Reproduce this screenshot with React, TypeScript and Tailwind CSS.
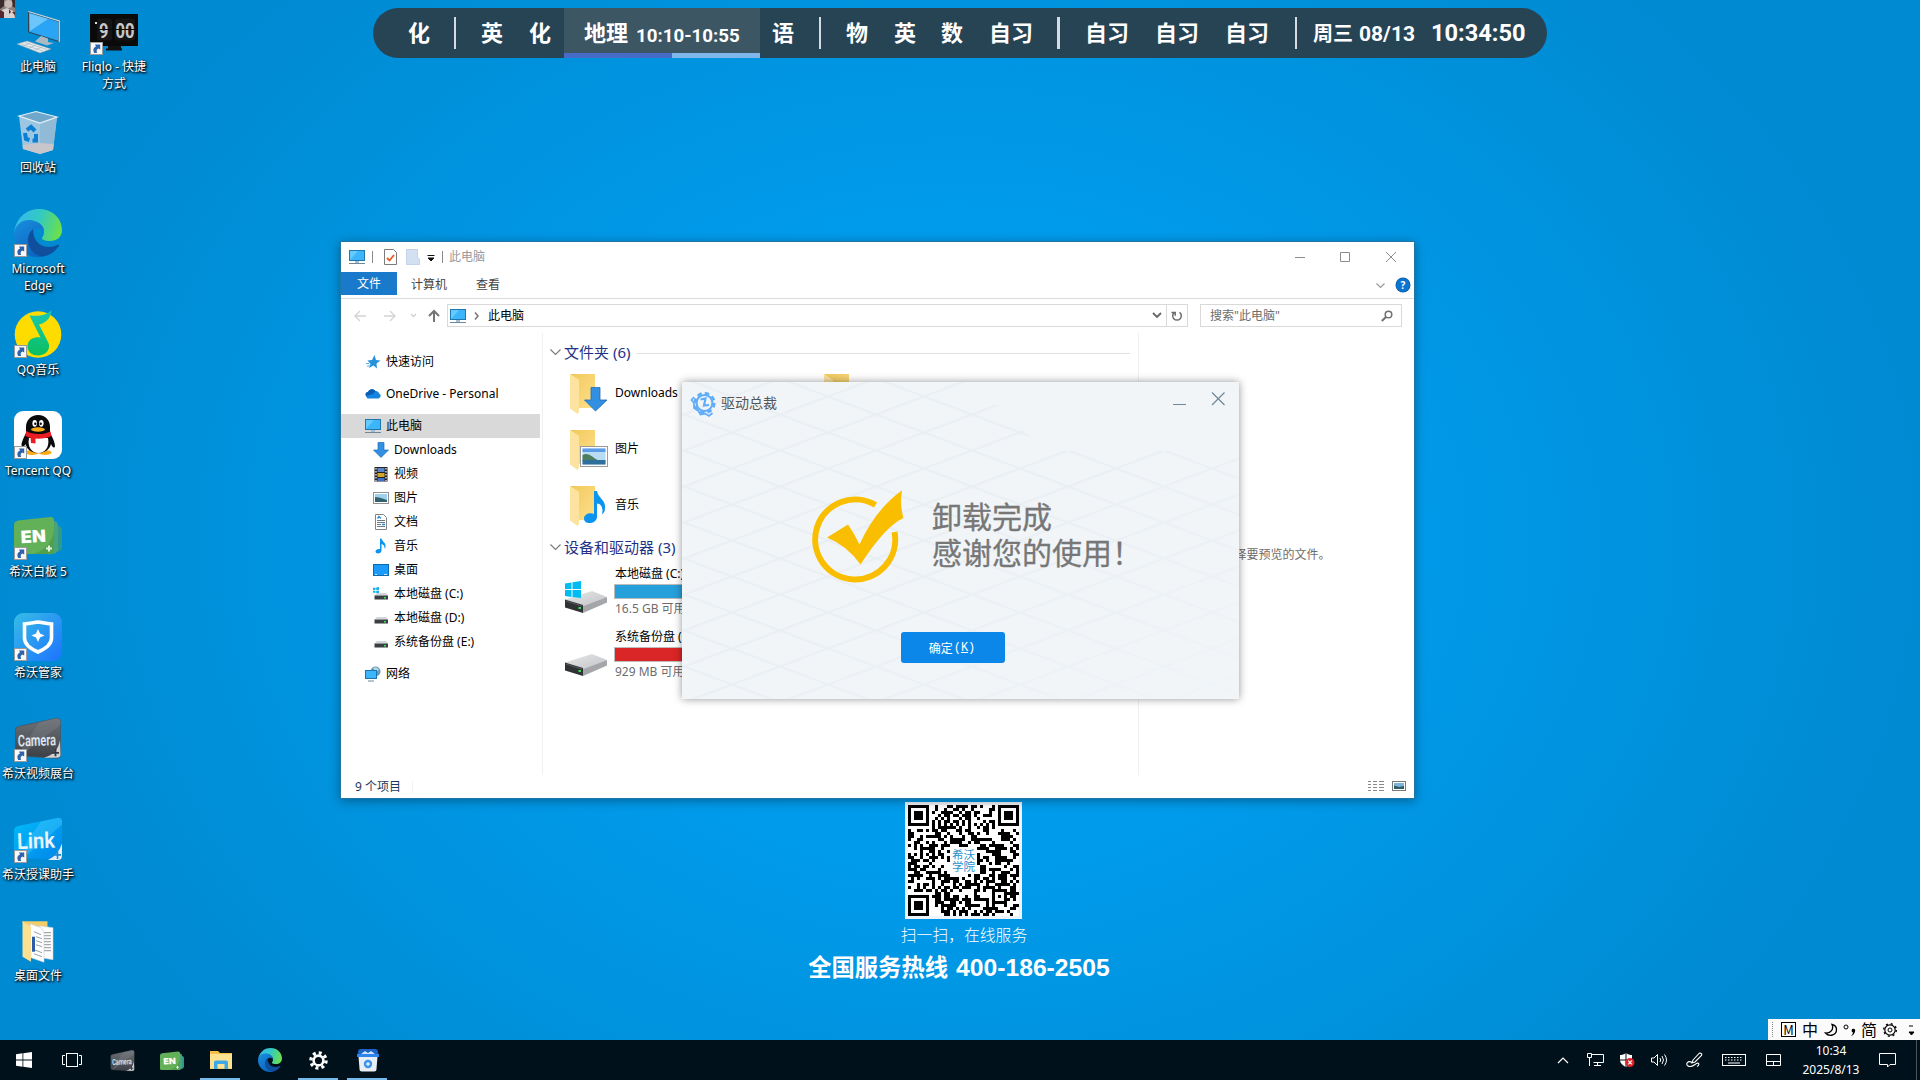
import type { ReactNode } from "react";

const UI = "font-['Noto_Sans','Noto_Sans_CJK_SC',sans-serif]";

/* ---------- shared icons ---------- */

function Monitor() {
  return (
    <svg width="16" height="16" viewBox="0 0 16 16" className="shrink-0">
      <rect x="0.5" y="1.5" width="15" height="10" fill="#3db5fb" stroke="#1f77ab" />
      <path d="M1 11 L9 2 H1Z" fill="#65cbff" />
      <rect x="6" y="12" width="4" height="2" fill="#9dc0d6" />
      <rect x="0" y="14" width="16" height="1" fill="#6f8797" />
    </svg>
  );
}

function Shortcut() {
  return (
    <svg width="13" height="13" viewBox="0 0 13 13" className="absolute bottom-0 left-0">
      <rect x="0.5" y="0.5" width="12" height="12" fill="#f6f8fa" stroke="#9b9b9b" />
      <path d="M4.2 11 C2.6 8 3.4 5.6 6 4.6 L5 2.6 H10.2 V7.6 L8.4 6.6 C6.6 7.4 6.4 8.6 7 11Z" fill="#2f62a8" />
    </svg>
  );
}

function EdgeLogo({ size, id }: { size: number; id: string }) {
  return (
    <svg width={size} height={size} viewBox="0 0 48 48">
      <defs>
        <linearGradient id={`${id}a`} x1="0" y1="0.3" x2="1" y2="0.5">
          <stop offset="0" stopColor="#35b8f0" />
          <stop offset="0.5" stopColor="#32c9c4" />
          <stop offset="1" stopColor="#6be04a" />
        </linearGradient>
        <linearGradient id={`${id}b`} x1="0" y1="0" x2="0.6" y2="1">
          <stop offset="0" stopColor="#1a8fe0" />
          <stop offset="1" stopColor="#0a66c0" />
        </linearGradient>
      </defs>
      <path d="M0 24 C2 9 12 0 25 0 C39 0 48 10 48 21 C48 28 43 32 36 32 C31 32 28 31 28 29 C28 28 30 27 30 23 C30 16 23 12 15 12 C8 12 2 17 0 24Z" fill={`url(#${id}a)`} />
      <path d="M0 24 C2 15 8 11 15 11 C23 11 30 16 30 22 C28 19 22 18 19 22 C13 29 18 44 30 47.5 C12 51 0 38 0 24Z" fill={`url(#${id}b)`} />
      <path d="M19 20 C13 25 11 36 20 44 C24 47 28 48 31 47 C37 46 42 41 45 37 C45.500 36 44.500 35.500 43.500 36 C33 41 19 37 19 20Z" fill="#0f4f9e" />
    </svg>
  );
}

function EnLogo({ w }: { w: number }) {
  return (
    <svg width={w} height={w} viewBox="0 -3.500 48 48">
      <path d="M38 8 L46 11 Q48 12 48 15 V32 Q47 36 44 36 L38 37Z" fill="#2f9a86" />
      <path d="M36 5 L42 6 Q44 7 44 10 V34 Q43 38 40 38 L34 39Z" fill="#4aa27a" />
      <path d="M0 9 Q0 6 4 5 L36 1.500 Q40 1 40 5 V35 Q40 38.500 36 38.500 H3 Q0 38.500 0 36Z" fill="#62b058" />
      <path d="M40 14 Q38 32 20 38.500 H36 Q40 38.500 40 35Z" fill="#51a04b" />
      <path d="M32 33 H38 M35 30 V36" stroke="#dff2dc" strokeWidth="2" />
      <text x="7" y="27" fontSize="17" fontWeight="900" fill="#fff" fontFamily="Inter" textLength="25" lengthAdjust="spacingAndGlyphs" transform="rotate(-3 20 25)">EN</text>
    </svg>
  );
}

function CameraLogo({ w, id }: { w: number; id: string }) {
  return (
    <svg width={w} height={w} viewBox="0 -2.800 48 48">
      <defs>
        <linearGradient id={id} x1="0" y1="0" x2="0" y2="1">
          <stop offset="0" stopColor="#6d7278" />
          <stop offset="1" stopColor="#3c4045" />
        </linearGradient>
      </defs>
      <path d="M1.500 13 Q1.500 10 5 9.500 L42 1.500 Q46.500 1 46.500 5 V38 Q46.500 41.500 43 41.500 L4 39 Q1.500 38 1.500 36Z" fill={`url(#${id})`} stroke="#4a4e53" strokeWidth="0.600" />
      <path d="M25 5.500 L42 1.500 Q46.500 1 46.500 5 V8 L8 38 L4 38 L12 26Z" fill="#80858a" opacity="0.35" />
      <path d="M46 23 Q44 37 30 41 H43 Q46.500 41 46.500 38Z" fill="#cfd2d5" />
      <path d="M38 36 H45 M41.500 32.500 V39.500" stroke="#33373b" strokeWidth="1.800" />
      <text x="4" y="29" fontSize="16" fontWeight="600" fill="#dce6f0" fontFamily="Roboto" textLength="38" lengthAdjust="spacingAndGlyphs" transform="rotate(-2 24 26)">Camera</text>
    </svg>
  );
}

function ThisPc() {
  return (
    <svg width="48" height="48" viewBox="0 0 48 48">
      <path d="M14.500 5 L45 14.500 V34.500 L14.500 25Z" fill="#2aa4f4" stroke="#30434f" strokeWidth="1" />
      <path d="M15.500 6.500 L34 12 L16 24Z" fill="#6cc6fb" />
      <path d="M14.300 4.500 L45.300 14 V35" fill="none" stroke="#cdd9e0" strokeWidth="1.200" />
      <path d="M27 29 L34 31.500 V35 L40 36 L33 38.500 L21 34.500Z" fill="#a9bac4" />
      <path d="M3 37 L13 34 L37 42 L26 46Z" fill="#e5ebef" stroke="#90a2ad" strokeWidth="0.600" />
      <path d="M7 37 L29 44 M11 35.500 L33 42.500 M9 39 L16 36 M15 41 L22 38 M21 43 L28 40" stroke="#a9b7c0" strokeWidth="0.700" />
    </svg>
  );
}

function RecycleBin() {
  return (
    <svg width="48" height="48" viewBox="0 0 48 48">
      <path d="M5 8 L23 14 L43 9 L39 42 L26 46 L9 41Z" fill="#a9cbe2" opacity="0.92" />
      <path d="M26 14.500 L43 9 L39 42 L26 46Z" fill="#8fb8d5" opacity="0.900" />
      <path d="M5 8 L22 3.500 L43 9 L26 15Z" fill="#6fa7cb" stroke="#e3eff6" strokeWidth="1.200" />
      <path d="M8.500 37 L26 35 L39.500 36 L39 42 L26 46 L9 41Z" fill="#c9c6cb" />
      <g fill="none" stroke="#0b7fd4" strokeWidth="4">
        <path d="M13 22 L17 19 L21 23" />
        <path d="M11 25 L12 31 L15.500 32" />
        <path d="M22 26 L22 32.500 L18.500 32.500" />
      </g>
    </svg>
  );
}

function Fliqlo() {
  return (
    <svg width="48" height="48" viewBox="0 0 48 48">
      <rect x="0" y="7" width="48" height="32" fill="#0a0a0a" />
      <path d="M18 39 H31 V41.500 H32 V43.500 H16 V41.500 H18Z" fill="#111" />
      <rect x="7" y="11.500" width="15" height="22" rx="2" fill="#151515" />
      <rect x="25" y="11.500" width="20" height="22" rx="2" fill="#151515" />
      <text x="9" y="30.500" fontSize="21" fontWeight="700" fill="#c9c9c9" fontFamily="Roboto" textLength="9.500" lengthAdjust="spacingAndGlyphs">9</text>
      <text x="25.500" y="30.500" fontSize="21" fontWeight="700" fill="#c9c9c9" fontFamily="Roboto" textLength="19" lengthAdjust="spacingAndGlyphs">00</text>
      <rect x="5" y="15" width="2" height="2" fill="#ddd" />
      <path d="M7 22.500 H45" stroke="#0a0a0a" strokeWidth="1" />
    </svg>
  );
}

function QQMusic() {
  return (
    <svg width="48" height="48" viewBox="0 0 48 48">
      <defs>
        <linearGradient id="qm" x1="0" y1="0" x2="0" y2="1">
          <stop offset="0" stopColor="#18c9b4" />
          <stop offset="1" stopColor="#0abf5f" />
        </linearGradient>
      </defs>
      <circle cx="24" cy="24.500" r="23.300" fill="#fedc00" />
      <path d="M37.500 0 C37 8 32 13 25 14.500 L34.500 33 C37 40 31 45.500 24 45.500 C17 45.500 13.500 41 13.500 36.500 C13.500 30 19 26 26.500 27.500 L15.500 5.500 C25 6.500 33 5 37.500 0Z" fill="url(#qm)" />
    </svg>
  );
}

function QQ() {
  return (
    <svg width="48" height="48" viewBox="0 0 48 48">
      <rect width="48" height="48" rx="9" fill="#fff" />
      <ellipse cx="18" cy="41.500" rx="7" ry="2.500" fill="#fbab18" />
      <ellipse cx="31" cy="41.500" rx="6.500" ry="2.500" fill="#fbab18" />
      <path d="M24 4 C32 4 36 10 36 16 V22 C39 27 41 32 41 35 C40.500 38 38 36 37 33 C36 38 31 42 24 42 C18 42 12 38 11.500 33 C10 36 8 37 7.500 34 C7.500 31 10 26 12 22 V16 C12 9 17 4 24 4Z" fill="#0a0a0a" />
      <path d="M15 27 H34 C36 37 30 42 24.500 42 C18 42 13 36 15 27Z" fill="#fff" />
      <ellipse cx="20.700" cy="12.300" rx="2.300" ry="3.400" fill="#fff" />
      <ellipse cx="27.300" cy="12.300" rx="2.300" ry="3.400" fill="#fff" />
      <circle cx="21.300" cy="12.800" r="1.200" fill="#111" />
      <circle cx="26.700" cy="12.800" r="1.200" fill="#111" />
      <ellipse cx="24" cy="18.500" rx="7" ry="2.200" fill="#fbab18" />
      <path d="M12 20 C18 24 30 24 36.500 20.500 L37.500 25 C30 28.500 19 28.500 11.500 25Z" fill="#ec1c24" />
      <path d="M16.500 26 H21.500 V32.500 L17 32Z" fill="#ec1c24" />
    </svg>
  );
}

function Guard() {
  return (
    <svg width="48" height="48" viewBox="0 0 48 48">
      <defs>
        <linearGradient id="gd" x1="0" y1="0" x2="1" y2="1">
          <stop offset="0" stopColor="#36bde6" />
          <stop offset="1" stopColor="#1d73ff" />
        </linearGradient>
      </defs>
      <rect width="48" height="48" rx="9" fill="url(#gd)" />
      <path d="M10.500 11 C16 10.500 20 9.500 24 9 C28 9.500 32 10.500 37.500 11 V25 C37.500 32 31 36 24 39 C17 36 10.500 32 10.500 25Z" fill="none" stroke="#fff" strokeWidth="3.600" />
      <path d="M24 16 L26 20.500 L30.500 22.500 L26 24.500 L24 29 L22 24.500 L17.500 22.500 L22 20.500Z" fill="#fff" />
    </svg>
  );
}

function LinkLogo() {
  return (
    <svg width="48" height="48" viewBox="0 -2.400 48 48">
      <defs>
        <linearGradient id="lk" x1="0" y1="0" x2="1" y2="1">
          <stop offset="0" stopColor="#00bdfb" />
          <stop offset="1" stopColor="#0084e8" />
        </linearGradient>
      </defs>
      <path d="M0 13 Q0 9.500 4 8.500 L43 0.500 Q48 0 48 4 V38 Q48 42.500 44 42.500 L4 40 Q0 40 0 36Z" fill="url(#lk)" />
      <path d="M27 4 L43 0.500 Q48 0 48 4 V7 L10 40 H4 L14 22Z" fill="#52d0ff" opacity="0.350" />
      <path d="M48 26 Q44 38 34 42.500 H44 Q48 42.500 48 38Z" fill="#e3edf3" />
      <path d="M39 37.500 H47 M43.500 34 V41.500" stroke="#2086d4" strokeWidth="1.600" />
      <text x="3" y="31" fontSize="22" fontWeight="600" fill="#e9f4fc" fontFamily="Roboto" textLength="38" lengthAdjust="spacingAndGlyphs" transform="rotate(-2 20 25)">Link</text>
    </svg>
  );
}

function DocFolder() {
  return (
    <svg width="48" height="48" viewBox="0 -2.700 48 48">
      <path d="M8.500 2.500 H33.500 V38 H16Z" fill="#f2cd68" />
      <path d="M25 7 L39 9 V41 L27 39Z" fill="#fdfdfd" stroke="#c9ced3" strokeWidth="0.600" />
      <path d="M29 14 H37 M29 17 H37 M29 20 H37 M29 23 H37 M29 26 H37 M29 29 H37 M29 32 H37" stroke="#8f979e" strokeWidth="1" />
      <path d="M16 5 L27 9 L30 14 V43.500 L17 39Z" fill="#fff" stroke="#c9ced3" strokeWidth="0.600" />
      <path d="M20 13 L27 16 M22 18 L28 20 M22 22 L28 24 M22 26 L28 28 M20 31 L28 34 M20 35 L28 38" stroke="#9aa1a8" strokeWidth="1" />
      <rect x="18" y="18" width="3" height="15" fill="#2d5ca8" />
      <path d="M8.500 2.500 L17 8 V43 L8.500 38Z" fill="#fbe093" />
    </svg>
  );
}

/* ---------- desktop ---------- */

type DesktopItem = { label: string; icon: ReactNode; link?: boolean };

const columnOne: DesktopItem[] = [
  { label: "此电脑", icon: <ThisPc /> },
  { label: "回收站", icon: <RecycleBin /> },
  { label: "Microsoft Edge", icon: <EdgeLogo size={48} id="ed" />, link: true },
  { label: "QQ音乐", icon: <QQMusic />, link: true },
  { label: "Tencent QQ", icon: <QQ />, link: true },
  { label: "希沃白板 5", icon: <EnLogo w={48} />, link: true },
  { label: "希沃管家", icon: <Guard />, link: true },
  { label: "希沃视频展台", icon: <CameraLogo w={48} id="cm" />, link: true },
  { label: "希沃授课助手", icon: <LinkLogo />, link: true },
  { label: "桌面文件", icon: <DocFolder /> },
];

function DesktopIcon({ label, icon, link }: DesktopItem) {
  return (
    <div className="flex h-[101px] w-[76px] flex-col items-center">
      <div className="relative h-12 w-12 shrink-0">
        {icon}
        {link && <Shortcut />}
      </div>
      <div className="mt-[3px] w-[74px] text-center text-[12px] leading-[17px] text-white [text-shadow:1px_1px_2px_#000,1px_1px_3px_#000]">{label}</div>
    </div>
  );
}

function Sep({ w }: { w: string }) {
  return <div className={`h-8 shrink-0 bg-[#d5dbe0] ${w}`} />;
}

function Schedule() {
  return (
    <div className="absolute left-[373px] top-2 flex h-[50px] w-[1174px] items-center overflow-hidden rounded-full bg-[#274455] pl-[35px] font-['Roboto','Noto_Sans_CJK_SC',sans-serif] text-[22px] font-bold leading-none whitespace-nowrap text-white">
      <span className="mt-[2px] w-[22px]">化</span>
      <div className="ml-6"><Sep w="w-[2px]" /></div>
      <span className="mt-[2px] ml-[25px] w-[22px]">英</span>
      <span className="mt-[2px] ml-[26px] w-[22px]">化</span>
      <div className="relative ml-[13px] flex h-full w-[196px] shrink-0 items-center bg-[#3c5663] pl-5">
        <span className="mt-[2px] w-11">地理</span>
        <span className="mt-[7px] ml-2 text-[18.700px]">10:10-10:55</span>
        <div className="absolute bottom-0 left-0 flex h-[5px] w-full">
          <div className="w-[108px] bg-[#466cc8]" />
          <div className="flex-1 bg-[#7fb7ea]" />
        </div>
      </div>
      <span className="mt-[2px] ml-3 w-[22px]">语</span>
      <div className="ml-[25px]"><Sep w="w-[2px]" /></div>
      <span className="mt-[2px] ml-[25px] w-[22px]">物</span>
      <span className="mt-[2px] ml-[26px] w-[22px]">英</span>
      <span className="mt-[2px] ml-[25px] w-[22px]">数</span>
      <span className="mt-[2px] ml-[26px] w-11">自习</span>
      <div className="ml-6"><Sep w="w-[3px]" /></div>
      <span className="mt-[2px] ml-[25px] w-11">自习</span>
      <span className="mt-[2px] ml-[26px] w-11">自习</span>
      <span className="mt-[2px] ml-[26px] w-11">自习</span>
      <div className="ml-[26px]"><Sep w="w-[2px]" /></div>
      <span className="mt-[2px] ml-4 text-[20px]">周三</span>
      <span className="mt-[2px] ml-[6px] text-[21px]">08/13</span>
      <span className="mt-[2px] ml-4 text-[23.600px]">10:34:50</span>
    </div>
  );
}

/* ---------- QR code ---------- */

const N = 37;
function qrDark(x: number, y: number): boolean {
  const finder = (fx: number, fy: number): boolean | null => {
    const dx = x - fx;
    const dy = y - fy;
    if (dx < -1 || dy < -1 || dx > 7 || dy > 7) return null;
    const d = Math.max(Math.abs(dx - 3), Math.abs(dy - 3));
    return d === 3 || d <= 1;
  };
  for (const [fx, fy] of [[0, 0], [N - 7, 0], [0, N - 7]]) {
    const f = finder(fx, fy);
    if (f !== null) return f;
  }
  const a = Math.max(Math.abs(x - 30), Math.abs(y - 30));
  if (a <= 2) return a !== 1;
  if (x > 13 && x < 23 && y > 13 && y < 23) return false;
  if (y === 6) return x % 2 === 0;
  if (x === 6) return y % 2 === 0;
  let h = (x * 374761393 + y * 668265263) | 0;
  h = Math.imul(h ^ (h >>> 13), 1274126177);
  return ((h ^ (h >>> 16)) & 255) < 130;
}
let qrPath = "";
for (let y = 0; y < N; y++) for (let x = 0; x < N; x++) if (qrDark(x, y)) qrPath += `M${x} ${y}h1v1h-1z`;

function Hotline() {
  return (
    <div className="absolute left-[763px] top-[802px] flex w-[402px] flex-col items-center text-white">
      <div className="relative mr-[1px] flex h-[117px] w-[117px] items-center justify-center border-[3px] border-[#eef4f8] bg-white">
        <svg width="111" height="111" viewBox="0 0 37 37" shapeRendering="crispEdges"><path d={qrPath} fill="#000" /></svg>
        <div className="absolute left-[44px] top-[43px] w-6 font-['Noto_Sans_CJK_SC',sans-serif] text-[11.5px] leading-[12px] text-[#2a93cf]">希沃学院</div>
      </div>
      <div className="mt-[4px] font-['Noto_Sans_CJK_SC',sans-serif] text-[15.8px] leading-6 font-light whitespace-nowrap">扫一扫，在线服务</div>
      <div className="mt-px flex items-center gap-2 pr-[10px] font-['Liberation_Sans','Noto_Sans_CJK_SC',sans-serif] font-bold leading-10 whitespace-nowrap">
        <span className="text-[23.300px]">全国服务热线</span>
        <span className="text-[24.700px]">400-186-2505</span>
      </div>
    </div>
  );
}

/* ---------- explorer ---------- */

function MiniDrive({ win }: { win?: boolean }) {
  return (
    <svg width="16" height="16" viewBox="0 0 16 16">
      {win && <path d="M0 2 L2.500 1.600 V4 H0Z M3.200 1.500 L6 1 V4 H3.200Z M0 4.700 H2.500 V7 L0 6.600Z M3.200 4.700 H6 V7.600 L3.200 7.100Z" fill="#15aeea" />}
      <path d="M4 7 H13 L15 9.500 H1.500Z" fill="#d3d6d9" />
      <rect x="1.500" y="9.500" width="13.500" height="4" fill="#3a3f44" />
      <rect x="11" y="11" width="2" height="1.500" fill="#3fe05a" />
    </svg>
  );
}

const navSub: { label: string; icon: ReactNode }[] = [
  { label: "Downloads", icon: <svg width="16" height="16" viewBox="0 0 16 16"><path d="M5 0.500 H11 V8 H15.500 L8 15.500 L0.500 8 H5Z" fill="#338fe2" stroke="#1c6db8" strokeWidth="0.700" /></svg> },
  { label: "视频", icon: <svg width="16" height="16" viewBox="0 0 16 16"><rect x="1.500" y="1" width="13" height="14.500" fill="#222" /><rect x="4.500" y="2" width="7" height="4" fill="#5a86c9" /><rect x="4.500" y="7" width="7" height="4" fill="#d5a52b" /><rect x="4.500" y="12" width="7" height="3" fill="#3f6fc9" /><path d="M3 2 V15 M13 2 V15" stroke="#fff" strokeWidth="1.200" strokeDasharray="1.500 1.500" /></svg> },
  { label: "图片", icon: <svg width="16" height="16" viewBox="0 0 16 16"><rect x="0.500" y="2.500" width="15" height="11" fill="#fff" stroke="#919191" /><rect x="2" y="4" width="12" height="8" fill="#9fd0ef" /><path d="M2 7 Q6 7 14 10 V12 H2Z" fill="#33626e" /></svg> },
  { label: "文档", icon: <svg width="16" height="16" viewBox="0 0 16 16"><path d="M2.500 0.500 H10.500 L13.500 3.500 V15.500 H2.500Z" fill="#fff" stroke="#848484" /><path d="M4 6.500 H12 M4 8.500 H12 M4 10.500 H8 M4 12.500 H12" stroke="#6e7880" /><path d="M4.500 4.500 L6 2.500 L8 4.500 M9 10.500 H12" stroke="#2d86d0" strokeWidth="1.400" fill="none" /></svg> },
  { label: "音乐", icon: <svg width="16" height="16" viewBox="0 0 16 16"><path d="M7 0.500 H8.500 C9 3.500 13 4.500 12.500 8.500 C12.500 10 12 10.500 11.500 11 C12 8 10.500 6.500 8.500 6 V12.500 C8.500 16 2.500 16.500 2.500 13.500 C2.500 11.500 5.500 10.500 7 11.300Z" fill="#0b93f0" /></svg> },
  { label: "桌面", icon: <svg width="16" height="16" viewBox="0 0 16 16"><rect x="0.500" y="2.500" width="15" height="11" fill="#1a9bfc" stroke="#0a6bb2" /><path d="M2 12.500 H4 M11 12.500 H14" stroke="#cfe9fb" /></svg> },
  { label: "本地磁盘 (C:)", icon: <MiniDrive win /> },
  { label: "本地磁盘 (D:)", icon: <MiniDrive /> },
  { label: "系统备份盘 (E:)", icon: <MiniDrive /> },
];

function FolderIcon({ kind }: { kind: string }) {
  return (
    <svg width="40" height="42" viewBox="0 0 40 42">
      <defs>
        <linearGradient id="fo" x1="0" y1="0" x2="1" y2="1">
          <stop offset="0" stopColor="#f0c85c" />
          <stop offset="1" stopColor="#ffe08a" />
        </linearGradient>
      </defs>
      <path d="M0 0 H25 V34 H8Z" fill="url(#fo)" />
      <path d="M0 0 L9 6 V38 L7.500 40 L0 34.500Z" fill="#fce3a0" />
      {kind === "down" && <path d="M21 13.500 H30 V26 H37 L25.500 37 L14.500 26 H21Z" fill="#338fe2" stroke="#1c6db8" strokeWidth="0.800" />}
      {kind === "pic" && (
        <g>
          <rect x="10.500" y="16.500" width="27" height="20" fill="#fff" stroke="#9a9a9a" />
          <rect x="12.500" y="18.500" width="23" height="16" fill="#b9dcf5" />
          <rect x="12.500" y="18.500" width="23" height="3.500" fill="#5b9be8" />
          <path d="M12.500 25 Q17 22 23 27 T35.500 30.500 V31 H12.500Z" fill="#4c7d5e" />
          <rect x="12.500" y="30" width="23" height="4.500" fill="#2f6f9c" />
        </g>
      )}
      {kind === "music" && <path d="M24 5 H27 C28 12 36 14 35 22 C35 26 33.500 27 32 28.500 C33.500 21 31 18 27 17.500 V31 C27 38 14 39.500 14 32.500 C14 28 20 26 24 28Z" fill="#0b93f0" />}
    </svg>
  );
}

function Drive({ win }: { win?: boolean }) {
  return (
    <svg width="42" height="34" viewBox="0 0 42 34">
      <defs>
        <linearGradient id="dv" x1="0" y1="0" x2="1" y2="1">
          <stop offset="0" stopColor="#e6e7e9" />
          <stop offset="1" stopColor="#c2c4c7" />
        </linearGradient>
      </defs>
      <path d="M0 18.500 L27 10 L42 16 L18 25Z" fill="url(#dv)" />
      <path d="M18 25 L42 16 V21.500 L18 32Z" fill="#a4a6a9" />
      <path d="M0 18.500 L18 24 V32 L0 26.500Z" fill="#303335" />
      <path d="M1 20 L17 25" stroke="#565a5d" />
      <rect x="13.500" y="26" width="2.500" height="2" fill="#35e04e" />
      {win && <path d="M0 2.500 L6.500 1.500 V8 H0Z M7.500 1.300 L16 0 V8 H7.500Z M0 9 H6.500 V16 L0 15Z M7.500 9 H16 V17 L7.500 16Z" fill="#00bcf2" />}
    </svg>
  );
}

function GroupHeader({ label, line }: { label: string; line?: boolean }) {
  return (
    <div className="flex h-6 items-center text-[15px] leading-6 whitespace-nowrap text-[#1e3287]">
      <svg width="11" height="7" viewBox="0 0 11 7" className="mr-[3px] shrink-0"><path d="M0.500 0.500 L5.500 5.500 L10.500 0.500" fill="none" stroke="#777" strokeWidth="1.100" /></svg>
      <span>{label}</span>
      {line && <div className="mt-[2px] mr-2 ml-[7px] h-px flex-1 bg-[#e0e0e0]" />}
    </div>
  );
}

function DriveRow({ name, free, bar, win }: { name: string; free: string; bar: string; win?: boolean }) {
  return (
    <div className="flex h-[63px] pl-[15px]">
      <div className="w-[49px] shrink-0 pt-4"><Drive win={win} /></div>
      <div className="whitespace-nowrap">
        <div className="pl-px text-[12px] leading-[18px] text-black">{name}</div>
        <div className={`mt-px h-[15px] w-[184px] border border-[#bcbcbc] ${bar}`} />
        <div className="pt-px pl-px text-[12px] leading-[18px] text-[#6d6d6d]">{free}</div>
      </div>
    </div>
  );
}

function Explorer() {
  return (
    <div className="absolute left-[340px] top-[241px] flex h-[558px] w-[1075px] flex-col border border-[#2176a8] bg-white text-[12px] text-black shadow-[0_2px_10px_rgba(0,0,0,0.35)]">
      <div className="flex h-[30px] shrink-0 items-center pb-px pl-2">
        <Monitor />
        <div className="ml-[7px] h-3 w-px bg-[#8a8a8a]" />
        <svg width="13" height="16" viewBox="0 0 13 16" className="ml-[11px]"><path d="M0.500 0.500 H9.500 L12.500 3.500 V15.500 H0.500Z" fill="#fff" stroke="#7b7b7b" /><path d="M3 9 L5.500 11.500 L10 6" fill="none" stroke="#ea5b20" strokeWidth="1.800" /></svg>
        <svg width="14" height="16" viewBox="0 0 14 16" className="ml-[9px]"><path d="M0.500 0.500 H11.500 V9 L13.500 10 V15.500 H0.500Z" fill="#d3e0f2" stroke="#c3d2e8" /></svg>
        <svg width="8" height="7" viewBox="0 0 8 7" className="mt-1 ml-[7px]"><path d="M0.500 0.500 H7.500 M1 3 H7 L4 6Z" fill="#111" stroke="#111" /></svg>
        <div className="ml-[7px] h-3 w-px bg-[#8a8a8a]" />
        <span className="mt-px ml-[6px] leading-[18px] text-[#999]">此电脑</span>
        <svg width="102" height="12" viewBox="0 0 102 12" className="mr-[17px] ml-auto"><path d="M0 6.500 H10 M45.500 1.500 H54.500 V10.500 H45.500Z M91 1 L101 11 M101 1 L91 11" fill="none" stroke="#8d8d8d" /></svg>
      </div>

      <div className="flex h-[27px] shrink-0 items-start border-b border-[#dadbdc] leading-[25px] text-[#444]">
        <div className="h-[23px] w-14 bg-[#1979ca] text-center leading-[24px] text-white">文件</div>
        <span className="ml-[14px]">计算机</span>
        <span className="ml-[29px]">查看</span>
        <svg width="9" height="6" viewBox="0 0 9 6" className="mt-[11px] ml-auto"><path d="M0.500 0.500 L4.500 4.500 L8.500 0.500" fill="none" stroke="#999" strokeWidth="1.200" /></svg>
        <div className="mt-[6px] mr-1 ml-[11px] flex h-[14px] w-[14px] items-center justify-center rounded-full bg-[#0b74d0] text-[10px] leading-none font-bold text-white ring-[0.5px] ring-[#0a4f91]">?</div>
      </div>

      <div className="flex h-[34px] shrink-0 items-center pb-px pl-[13px]">
        <svg width="88" height="16" viewBox="0 0 88 16" fill="none" className="mt-px shrink-0">
          <path d="M12 8 H1 M6 3 L1 8 L6 13 M30 8 H41 M36 3 L41 8 L36 13" stroke="#d4d4d4" strokeWidth="1.400" />
          <path d="M57 6 L59.500 8.500 L62 6" stroke="#cfcfcf" strokeWidth="1.300" />
          <path d="M80 14 V3 M75 8 L80 3 L85 8" stroke="#757575" strokeWidth="2" />
        </svg>
        <div className="ml-[5px] flex h-[23px] w-[741px] items-center border border-[#d9d9d9] pl-0.5">
          <Monitor />
          <svg width="5" height="8" viewBox="0 0 5 8" className="ml-2"><path d="M1 0.500 L4 4 L1 7.500" fill="none" stroke="#777" strokeWidth="1.500" /></svg>
          <span className="ml-[9px] leading-5">此电脑</span>
          <svg width="10" height="7" viewBox="0 0 10 7" className="mr-[4px] ml-auto"><path d="M1 1 L5 5 L9 1" fill="none" stroke="#666" strokeWidth="1.800" /></svg>
          <div className="h-full w-px bg-[#d9d9d9]" />
          <svg width="12" height="12" viewBox="0 0 12 12" className="mx-1"><path d="M3.500 2.300 A4.300 4.300 0 1 0 8.500 2.300 M0.500 2.500 H4.200 V5.800" fill="none" stroke="#6b6b6b" strokeWidth="1.500" /></svg>
        </div>
        <div className="ml-3 flex h-[23px] w-[202px] items-center border border-[#d9d9d9] pr-2 pl-[9px] text-[#6d6d6d]">
          <span>搜索"此电脑"</span>
          <svg width="12" height="12" viewBox="0 0 12 12" className="ml-auto"><circle cx="7.500" cy="4.500" r="3.300" fill="none" stroke="#707070" strokeWidth="1.500" /><path d="M5 7 L0.800 11" stroke="#707070" strokeWidth="2" /></svg>
        </div>
      </div>

      <div className="flex min-h-0 flex-1">
        <div className="flex w-[202px] shrink-0 flex-col border-r border-[#f0f0f0] pt-[17px] leading-6 whitespace-nowrap">
          <div className="flex h-6 items-center gap-[5px] pl-6">
            <svg width="16" height="16" viewBox="0 0 16 16"><path d="M9.500 1 L11 6 L15.500 6.500 L11.500 9.500 L12 14.500 L8.500 11.500 L4 14 L5.500 10 L2.500 6.500 L7 6Z" fill="#2593dc" /><path d="M1 9.500 H4 M2 12 H5" stroke="#4fb0ea" strokeWidth="1.200" /></svg>
            <span>快速访问</span>
          </div>
          <div className="mt-2 flex h-6 items-center gap-[5px] pl-6">
            <svg width="16" height="16" viewBox="0 0 16 16"><path d="M1.500 11 C-0.500 8.500 1 6 3 6 C4 3 8 2 10.500 5 C13 5 14 6.500 14.200 7.500 C16.500 8.500 16 12.500 13 12.500 H4 C2.500 12.500 1.800 12 1.500 11Z" fill="#1584de" /><path d="M3 6 C4 3 8 2 10.500 5 L8 8 L1 10 C0 8 1 6 3 6Z" fill="#0a5cb4" /></svg>
            <span>OneDrive - Personal</span>
          </div>
          <div className="mt-2 mr-[2px] flex h-6 items-center gap-[5px] bg-[#d9d9d9] pl-6"><Monitor /><span>此电脑</span></div>
          {navSub.map((n) => (
            <div key={n.label} className="flex h-6 items-center gap-[5px] pl-8">{n.icon}<span>{n.label}</span></div>
          ))}
          <div className="mt-2 flex h-6 items-center gap-[5px] pl-6">
            <svg width="16" height="16" viewBox="0 0 16 16"><circle cx="10.500" cy="5.500" r="5" fill="#6699b8" /><path d="M8 2 Q12 0 14 4 L11 6Z" fill="#b6d5e2" /><rect x="0.500" y="4.500" width="11" height="8" fill="#3db5fb" stroke="#1c75ae" /><path d="M3 15 H9" stroke="#6f8797" /></svg>
            <span>网络</span>
          </div>
        </div>

        <div className="flex w-[596px] shrink-0 flex-col border-r border-[#f0f0f0] pt-[7px] pl-[7px]">
          <GroupHeader label="文件夹 (6)" line />
          <div className="mt-[10px] flex pl-5">
            <div className="flex w-[254px] flex-col gap-[14px]">
              {[["Downloads", "down"], ["图片", "pic"], ["音乐", "music"]].map(([n, k]) => (
                <div key={n} className="flex h-[42px] gap-[5px]"><FolderIcon kind={k} /><span className="pt-[10px] leading-[18px]">{n}</span></div>
              ))}
            </div>
            <FolderIcon kind="plain" />
          </div>
          <div className="mt-[7px]"><GroupHeader label="设备和驱动器 (3)" /></div>
          <div className="mt-[6px]">
            <DriveRow name="本地磁盘 (C:)" free="16.5 GB 可用" bar="bg-[#26a0da]" win />
            <DriveRow name="系统备份盘 (E:)" free="929 MB 可用" bar="bg-[#da2626]" />
          </div>
        </div>

        <div className="flex-1 pt-[213px] text-center leading-[18px] text-[#6d6d6d]">选择要预览的文件。</div>
      </div>

      <div className="flex h-[23px] shrink-0 items-center pr-2 pl-[14px] text-[#1e395b]">
        <span>9 个项目</span>
        <div className="ml-[11px] h-3 w-px bg-[#f2f2f2]" />
        <svg width="38" height="12" viewBox="0 0 38 12" className="mb-[2px] ml-auto">
          <path d="M0 1.500 H3 M0 4.500 H3 M0 7.500 H3 M0 10.500 H3 M5 1.500 H9 M5 4.500 H9 M5 7.500 H9 M5 10.500 H9 M11 1.500 H16 M11 4.500 H16 M11 7.500 H16 M11 10.500 H16" stroke="#8a8a8a" />
          <rect x="24.500" y="1.500" width="13" height="9" fill="#fff" stroke="#777" />
          <rect x="26" y="3" width="10" height="6" fill="#7fb2d8" />
          <path d="M26 5.500 L31 7 L36 6 V9 H26Z" fill="#2b5d63" />
        </svg>
      </div>
    </div>
  );
}

/* ---------- dialog ---------- */

function Dialog() {
  return (
    <div className="absolute left-[682px] top-[382px] h-[317px] w-[557px] bg-[#f1f5f8] font-['Noto_Sans_CJK_SC',sans-serif] shadow-[0_0_8px_rgba(0,0,0,0.42)]">
      <svg width="557" height="317" viewBox="0 0 557 317" className="absolute inset-0">
        <defs>
          <pattern id="grid" width="96" height="36" patternUnits="userSpaceOnUse" patternTransform="translate(50 50.500)">
            <path d="M-8 -3 L104 39 M-8 39 L104 -3" stroke="#e9eef3" strokeWidth="2" fill="none" />
          </pattern>
          <linearGradient id="fade" x1="0" y1="0" x2="1" y2="1">
            <stop offset="0.500" stopColor="#f1f5f8" stopOpacity="0" />
            <stop offset="1" stopColor="#f1f5f8" stopOpacity="0.800" />
          </linearGradient>
        </defs>
        <path d="M0 0 H290 L350 57 L345 69 H557 V317 H0Z" fill="url(#grid)" />
        <rect width="557" height="317" fill="url(#fade)" />
      </svg>
      <div className="relative flex h-full flex-col">
        <div className="flex h-10 items-center pl-2">
          <svg width="27" height="27" viewBox="0 0 27 27" className="mt-1">
            <g fill="none" stroke="#62adf8">
              <circle cx="14.500" cy="12" r="9.300" strokeWidth="3.600" strokeDasharray="4.300 3" />
              <circle cx="14.500" cy="12" r="8" strokeWidth="2.200" />
              <path d="M4 6 L1.500 9 L4 12 L4 17 L8 19.500 L10.500 23.500 L15 22.500 L19 25 L22.500 22" strokeWidth="1.800" />
              <path d="M10.500 8.500 L15.500 7.500 L14 14.500 L19 14" strokeWidth="2.200" />
            </g>
          </svg>
          <span className="ml-1 text-[14px] leading-5 text-[#555]">驱动总裁</span>
          <svg width="52" height="14" viewBox="0 0 52 14" className="mr-[14px] mb-[7px] ml-auto"><path d="M0 12.500 H13 M39 0.500 L51.500 13 M51.500 0.500 L39 13" fill="none" stroke="#6f8797" strokeWidth="1.200" /></svg>
        </div>
        <div className="flex pt-[65px] pl-[128px]">
          <svg width="96" height="96" viewBox="0 0 96 96" className="shrink-0">
            <path d="M65.500 18 A40 40 0 1 0 84.500 45" fill="none" stroke="#f9be00" strokeWidth="6" />
            <path d="M17 50.500 L38 37.500 Q44 46 49.500 57.500 Q65 23 92 3.200 Q89.500 18 93.500 31 Q75 39.500 50.500 77.500 Q37 58.500 17 50.500Z" fill="#f9be00" />
          </svg>
          <div className="ml-[26px] pt-[10px] text-[30px] leading-[36px] whitespace-nowrap text-[#777] [-webkit-text-stroke:0.300px_#777]">
            <div>卸载完成</div>
            <div>感谢您的使用！</div>
          </div>
        </div>
        <button className="mt-[49px] ml-[219px] flex h-[31px] w-[104px] items-center justify-center rounded-[3px] bg-[#0b87ea] pr-[2px] font-['Noto_Sans_CJK_SC',sans-serif] text-[12px] text-white">
          确定<span className="pl-px font-['Liberation_Mono',monospace]">(<span className="underline">K</span>)</span>
        </button>
      </div>
    </div>
  );
}

/* ---------- taskbar ---------- */

function Gear({ size, color, hole }: { size: number; color: string; hole: string }) {
  return (
    <svg width={size} height={size} viewBox="0 0 20 20">
      <circle cx="10" cy="10" r="8" fill="none" stroke={color} strokeWidth="3.500" strokeDasharray="3.140 3.140" />
      <circle cx="10" cy="10" r="6.500" fill={color} />
      <circle cx="10" cy="10" r="3.800" fill={hole} />
    </svg>
  );
}

function TaskItem({ children, active }: { children: ReactNode; active?: boolean }) {
  return (
    <div className="relative flex h-10 w-[49px] items-center justify-center">
      {children}
      {active && <div className="absolute bottom-0 left-1 h-[2px] w-10 bg-[#76b9ed]" />}
    </div>
  );
}

function Taskbar() {
  return (
    <div className="absolute bottom-0 left-0 flex h-10 w-full bg-[#00111b] text-white">
      <div className="flex h-10 w-12 items-center justify-center">
        <svg width="16" height="16" viewBox="0 0 16 16"><path d="M0 2.200 L6.500 1.300 V7.600 H0Z M7.300 1.200 L16 0 V7.600 H7.300Z M0 8.400 H6.500 V14.700 L0 13.800Z M7.300 8.400 H16 V16 L7.300 14.800Z" fill="#fff" /></svg>
      </div>
      <div className="mr-px flex h-10 w-12 items-center justify-center">
        <svg width="20" height="14" viewBox="0 0 20 14" fill="none" stroke="#fff"><rect x="4.500" y="0.500" width="11" height="13" /><path d="M3 2.500 H0.500 V11.500 H3 M17 2.500 H19.500 V11.500 H17" /></svg>
      </div>
      <div className="ml-px flex">
        <TaskItem><CameraLogo w={25} id="ct" /></TaskItem>
        <TaskItem><div className="mt-px"><EnLogo w={24} /></div></TaskItem>
      </div>
      <TaskItem active>
        <svg width="22" height="20" viewBox="0 0 22 20"><path d="M0 1 H8 L10 3 H22 V19 H0Z" fill="#f5c04a" /><rect y="4" width="22" height="14.500" fill="#fde391" /><path d="M4 19 V12 Q4 10.500 6 10.500 H16 Q18 10.500 18 12 V19 H14.500 V14 H7.500 V19Z" fill="#3fa9e8" /></svg>
      </TaskItem>
      <TaskItem><EdgeLogo size={24} id="et" /></TaskItem>
      <TaskItem active><Gear size={19} color="#fff" hole="#00111b" /></TaskItem>
      <TaskItem active>
        <svg width="22" height="24" viewBox="0 0 22 24"><path d="M1 4 Q1 1 4 1 H18 Q21 1 21 4 V9 H1Z" fill="#1b62c4" /><path d="M4 6 L8 3 L11 5 L14 3 L18 6Z" fill="#cfe2fa" /><path d="M1.500 8.500 H20.500 L19.500 21 Q19.500 23.500 17 23.500 H5 Q2.500 23.500 2.500 21Z" fill="#e9eef4" /><path d="M0 6 H22 V9 H0Z" fill="#2f86ea" /><circle cx="11" cy="16" r="3" fill="none" stroke="#3b93ef" strokeWidth="2.400" /></svg>
      </TaskItem>

      <div className="ml-auto flex h-10 items-center">
        <svg width="12" height="8" viewBox="0 0 12 8" className="mr-[18px]"><path d="M1 7 L6 2 L11 7" fill="none" stroke="#fff" strokeWidth="1.200" /></svg>
        <svg width="17" height="16" viewBox="0 0 17 16" className="mr-[15px]" fill="none" stroke="#fff"><path d="M4.500 2.500 H16.500 V10.500 H6.500 M10.500 10.500 V13.500 M7 13.500 H14 M0.500 1.500 H4.500 V5.500 H0.500Z M2.500 5.500 V14" /></svg>
        <svg width="16" height="16" viewBox="0 0 16 16" className="mr-4"><path d="M7 1 C9 2.500 11 3 13 3 V8 C13 11 10 13.500 7 15 C4 13.500 1 11 1 8 V3 C3 3 5 2.500 7 1Z" fill="#fff" /><path d="M7 1 V15 M1 8 H13" stroke="#00111b" /><circle cx="11" cy="10.500" r="4.500" fill="#d9252a" /><path d="M9.200 8.700 L12.800 12.300 M12.800 8.700 L9.200 12.300" stroke="#fff" strokeWidth="1.200" /></svg>
        <svg width="17" height="16" viewBox="0 0 17 16" className="mr-[18px]" fill="none" stroke="#fff"><path d="M0.500 6 H3 L6.500 2.500 V13.500 L3 10 H0.500Z M9 6 Q10.500 8 9 10 M11 4 Q14 8 11 12 M13.500 2.500 Q17.500 8 13.500 13.500" /></svg>
        <svg width="17" height="16" viewBox="0 0 17 16" className="mr-[19px]" fill="none" stroke="#fff" strokeWidth="1.100"><path d="M7 8 L13.500 1 Q16.500 1 15.500 3.500 L9 10 L6 11Z M6 10.500 C2 8 -1 12 2 14 C5 16 8 13 10.500 11.500 C13 10 14 13 11 14.500" /></svg>
        <svg width="24" height="14" viewBox="0 0 24 14" className="mr-5" fill="none" stroke="#fff"><rect x="0.500" y="1.500" width="23" height="11" /><path d="M3 4.500 H21 M3 7 H21" strokeDasharray="1.500 1.500" /><path d="M6 10 H18" /></svg>
        <svg width="15" height="14" viewBox="0 0 15 14" className="mr-4" fill="none" stroke="#fff"><path d="M0.500 1.500 H14.500 V12.500 H0.500Z M0.500 8.500 H14.500 M7.500 8.500 V12.500" /></svg>
        <div className="w-[68px] text-center text-[12px] leading-[19px] whitespace-nowrap">
          <div>10:34</div>
          <div>2025/8/13</div>
        </div>
        <svg width="17" height="16" viewBox="0 0 17 16" className="mr-5 ml-[14px]" fill="none" stroke="#fff"><path d="M0.500 1.500 H16.500 V12.500 H11 L8.500 15 V12.500 H0.500Z" /></svg>
        <div className="mr-[3px] h-10 w-px bg-[#4a555c]" />
      </div>
    </div>
  );
}

function ImeBar() {
  return (
    <div className="absolute right-0 bottom-10 flex h-[21px] w-[152px] items-center bg-[#fbfbfb] font-['Noto_Sans_CJK_SC',sans-serif] text-[16px] leading-none text-black">
      <div className="ml-1 h-[15px] w-px border-l border-dotted border-[#888]" />
      <div className="ml-2 flex h-[15px] w-[15px] items-center justify-center border border-black pb-px text-[13px] leading-none">M</div>
      <span className="mb-[2px] ml-[6px]">中</span>
      <svg width="14" height="14" viewBox="0 0 14 14" className="ml-[6px]"><path d="M8 1.500 C10 6 7 10.500 1.500 10 C5 14 12.500 12.500 12.500 6.500 C12.500 4 10.500 2 8 1.500Z" fill="none" stroke="#000" strokeWidth="1.300" /></svg>
      <svg width="14" height="14" viewBox="0 0 14 14" className="ml-[5px]"><circle cx="3" cy="4" r="2" fill="none" stroke="#000" /><path d="M9 6 Q13 5 12 9 Q11 12 8 13 Q10 11 10 9.500 Q8 9 9 6Z" fill="#000" /></svg>
      <span className="mb-[2px] ml-1">简</span>
      <div className="ml-[6px]">
        <svg width="14" height="14" viewBox="0 0 14 14" fill="none" stroke="#000"><circle cx="7" cy="7" r="5.200" strokeWidth="1.200" /><circle cx="7" cy="7" r="2" /><circle cx="7" cy="7" r="6.300" strokeWidth="1.400" strokeDasharray="2 2.950" /></svg>
      </div>
      <svg width="8" height="14" viewBox="0 0 8 14" className="ml-[10px]"><path d="M2 3 H6 M2 9 H7 L4.500 12Z" fill="#000" stroke="#000" /></svg>
    </div>
  );
}

export default function App() {
  return (
    <div className={`relative h-[1080px] w-[1920px] overflow-hidden bg-[#008ad2] bg-[radial-gradient(ellipse_960px_760px_at_50%_50%,#00a2f2_0%,#009aea_45%,#0092dd_75%,#008ad2_100%)] ${UI}`}>
      <div className="absolute left-0 top-[7px] flex flex-col">
        {columnOne.map((d) => <DesktopIcon key={d.label} {...d} />)}
      </div>
      <div className="absolute left-[76px] top-[7px]">
        <DesktopIcon label="Fliqlo - 快捷方式" icon={<Fliqlo />} link />
      </div>
      <svg width="15" height="18" viewBox="0 0 15 18" className="absolute left-0 top-0">
        <rect width="15" height="18" fill="#8d7f7c" />
        <path d="M0 0 H4 V6 L0 9Z M12 0 H15 V8 L12 6Z" fill="#3a2c2d" />
        <ellipse cx="8.500" cy="4" rx="4" ry="4" fill="#c9b9b6" />
        <path d="M2 10 L7 8 L13 11 L15 18 H3Z" fill="#d9d0d0" />
        <path d="M0 10 L4 12 V18 H0Z M9 9 L11 12 L9 14Z M12 12 H15 V15Z" fill="#57282b" />
      </svg>
      <Schedule />
      <Hotline />
      <Explorer />
      <Dialog />
      <ImeBar />
      <Taskbar />
    </div>
  );
}
